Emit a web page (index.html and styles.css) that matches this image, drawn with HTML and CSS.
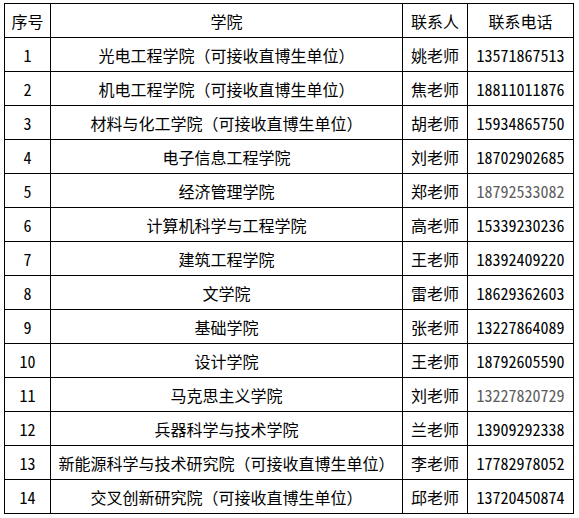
FILE: index.html
```html
<!DOCTYPE html>
<html lang="zh-CN">
<head>
<meta charset="utf-8">
<title>联系电话</title>
<link rel="stylesheet" href="styles.css">
</head>
<body>
<div class="table">
  <div class="cell">序号</div><div class="cell">学院</div><div class="cell">联系人</div><div class="cell">联系电话</div>
  <div class="cell num">1</div><div class="cell">光电工程学院（可接收直博生单位）</div><div class="cell">姚老师</div><div class="cell num">13571867513</div>
  <div class="cell num">2</div><div class="cell">机电工程学院（可接收直博生单位）</div><div class="cell">焦老师</div><div class="cell num">18811011876</div>
  <div class="cell num">3</div><div class="cell">材料与化工学院（可接收直博生单位）</div><div class="cell">胡老师</div><div class="cell num">15934865750</div>
  <div class="cell num">4</div><div class="cell">电子信息工程学院</div><div class="cell">刘老师</div><div class="cell num">18702902685</div>
  <div class="cell num">5</div><div class="cell">经济管理学院</div><div class="cell">郑老师</div><div class="cell num gray">18792533082</div>
  <div class="cell num">6</div><div class="cell">计算机科学与工程学院</div><div class="cell">高老师</div><div class="cell num">15339230236</div>
  <div class="cell num">7</div><div class="cell">建筑工程学院</div><div class="cell">王老师</div><div class="cell num">18392409220</div>
  <div class="cell num">8</div><div class="cell">文学院</div><div class="cell">雷老师</div><div class="cell num">18629362603</div>
  <div class="cell num">9</div><div class="cell">基础学院</div><div class="cell">张老师</div><div class="cell num">13227864089</div>
  <div class="cell num">10</div><div class="cell">设计学院</div><div class="cell">王老师</div><div class="cell num">18792605590</div>
  <div class="cell num">11</div><div class="cell">马克思主义学院</div><div class="cell">刘老师</div><div class="cell num gray">13227820729</div>
  <div class="cell num">12</div><div class="cell">兵器科学与技术学院</div><div class="cell">兰老师</div><div class="cell num">13909292338</div>
  <div class="cell num">13</div><div class="cell">新能源科学与技术研究院（可接收直博生单位）</div><div class="cell">李老师</div><div class="cell num">17782978052</div>
  <div class="cell num">14</div><div class="cell">交叉创新研究院（可接收直博生单位）</div><div class="cell">邱老师</div><div class="cell num">13720450874</div>
</div>
</body>
</html>
```
FILE: styles.css
```css
html, body {
  margin: 0;
  background: #fff;
}
body {
  padding: 3px 0 0 4px;
  font-family: "Noto Sans CJK SC", "Noto Sans", sans-serif;
  font-size: 16px;
  color: #000;
}
.table {
  display: grid;
  grid-template-columns: 45px 351px 64px 105px;
  grid-auto-rows: 33px;
  gap: 1px;
  padding: 1px;
  background: #000;
  width: max-content;
}
.cell {
  background: #fff;
  display: flex;
  align-items: center;
  justify-content: center;
  white-space: nowrap;
  line-height: 1;
}
.num {
  font-feature-settings: "hwid" 1;
}
.gray {
  color: #5c5c5c;
}
```
